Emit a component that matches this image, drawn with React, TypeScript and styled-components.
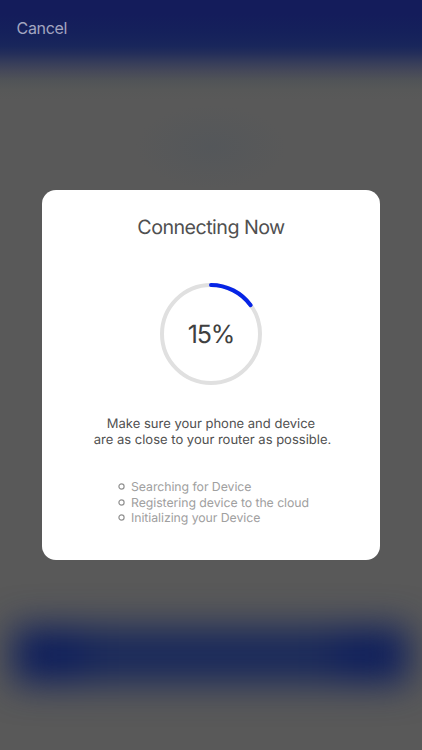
import React from "react";
import styled, { createGlobalStyle } from "styled-components";

const GlobalStyle = createGlobalStyle`
  * { box-sizing: border-box; }
  body { margin: 0; background: #595959; font-family: Inter, "Liberation Sans", sans-serif; text-rendering: geometricPrecision; }
`;

const Screen = styled.div`
  position: relative;
  width: 422px;
  height: 750px;
  overflow: hidden;
  display: flex;
  flex-direction: column;
  background: #595959;
`;

const Backdrop = styled.div`
  position: absolute;
  inset: 0;
  overflow: hidden;
`;

const HeaderGlow = styled.div`
  height: 100px;
  background: linear-gradient(
    #141c5b 0px, #141c5b 14px, #15215b 34px, #19265b 46px, #252f5a 54px,
    #353c5a 62px, #454859 71px, #505357 80px, #575858 90px, #595959 100px
  );
`;

const LogoGlow = styled.div`
  width: 150px;
  height: 84px;
  margin: 5px auto 0;
  background: radial-gradient(ellipse closest-side, #54575a, #595959);
`;

const ButtonGlow = styled.div`
  position: absolute;
  left: 13px;
  right: 13px;
  top: 627px;
  height: 56px;
  background: linear-gradient(90deg, #0c1d5c 0, #0c1d5c 52px, #18285b 90px, #18285b 300px, #0c1d5c 346px, #0c1d5c 100%);
  filter: blur(18px);
`;

const NavBar = styled.header`
  position: relative;
  height: 56px;
  padding: 0 16.5px;
  display: flex;
  align-items: center;
`;

const CancelButton = styled.button`
  padding: 0;
  border: 0;
  background: none;
  color: #a3a5c0;
  font: 400 16px/20px Inter, sans-serif;
  letter-spacing: -0.3px;
`;

const Dialog = styled.main`
  position: relative;
  width: 337.4px;
  height: 370px;
  margin: 134px 0 0 42.3px;
  padding-top: 25px;
  border-radius: 14px;
  background: #fff;
  display: flex;
  flex-direction: column;
  align-items: center;
`;

const Title = styled.h1`
  margin: 0;
  font-size: 19.7px;
  font-weight: 400;
  line-height: 25px;
  letter-spacing: -0.55px;
  color: #505050;
`;

const Progress = styled.div`
  display: grid;
  place-items: center;
  width: 102px;
  height: 102px;
  margin-top: 43px;
  > * { grid-area: 1 / 1; }
`;

const Percent = styled.span`
  padding-top: 2px;
  font-size: 25px;
  font-weight: 400;
  line-height: 30px;
  letter-spacing: -1.1px;
  color: #404040;
`;

const Hint = styled.p`
  margin: 31px 0 0;
  text-align: center;
  font-size: 13px;
  line-height: 16px;
  letter-spacing: 0;
  color: #505050;
  white-space: nowrap;
`;

const HintEnd = styled.span`
  padding-left: 3px;
`;

const Steps = styled.ul`
  list-style: none;
  width: 186px;
  margin: 31.2px 0 0;
  padding: 0;
`;

const Step = styled.li`
  display: flex;
  align-items: center;
  gap: 6px;
  height: 15.33px;
  font-size: 12.3px;
  line-height: 15px;
  letter-spacing: -0.06px;
  color: #a0a0a0;
  white-space: nowrap;
`;

const Marker = styled.svg`
  flex: none;
  width: 7px;
  height: 7px;
`;

const steps = ["Searching for Device", "Registering device to the cloud", "Initializing your Device"];
const percent = 15;

export default function App() {
  return (
    <Screen>
      <GlobalStyle />
      <Backdrop>
        <HeaderGlow />
        <LogoGlow />
        <ButtonGlow />
      </Backdrop>
      <NavBar>
        <CancelButton>Cancel</CancelButton>
      </NavBar>
      <Dialog>
        <Title>Connecting Now</Title>
        <Progress>
          <svg width="102" height="102" viewBox="0 0 102 102" fill="none" strokeWidth="4">
            <circle cx="51" cy="51" r="49" stroke="#e0e0e0" />
            <circle
              cx="51"
              cy="51"
              r="49"
              stroke="#0624e6"
              strokeLinecap="round"
              pathLength="100"
              strokeDasharray={`${percent} 100`}
              transform="rotate(-90 51 51)"
            />
          </svg>
          <Percent>{percent}%</Percent>
        </Progress>
        <Hint>
          Make sure your phone and device
          <br />
          <HintEnd>are as close to your router as possible.</HintEnd>
        </Hint>
        <Steps>
          {steps.map((s) => (
            <Step key={s}>
              <Marker viewBox="0 0 7 7">
                <circle cx="3.5" cy="3.5" r="2.6" fill="none" stroke="#929292" strokeWidth="1.2" />
              </Marker>
              <span>{s}</span>
            </Step>
          ))}
        </Steps>
      </Dialog>
    </Screen>
  );
}
